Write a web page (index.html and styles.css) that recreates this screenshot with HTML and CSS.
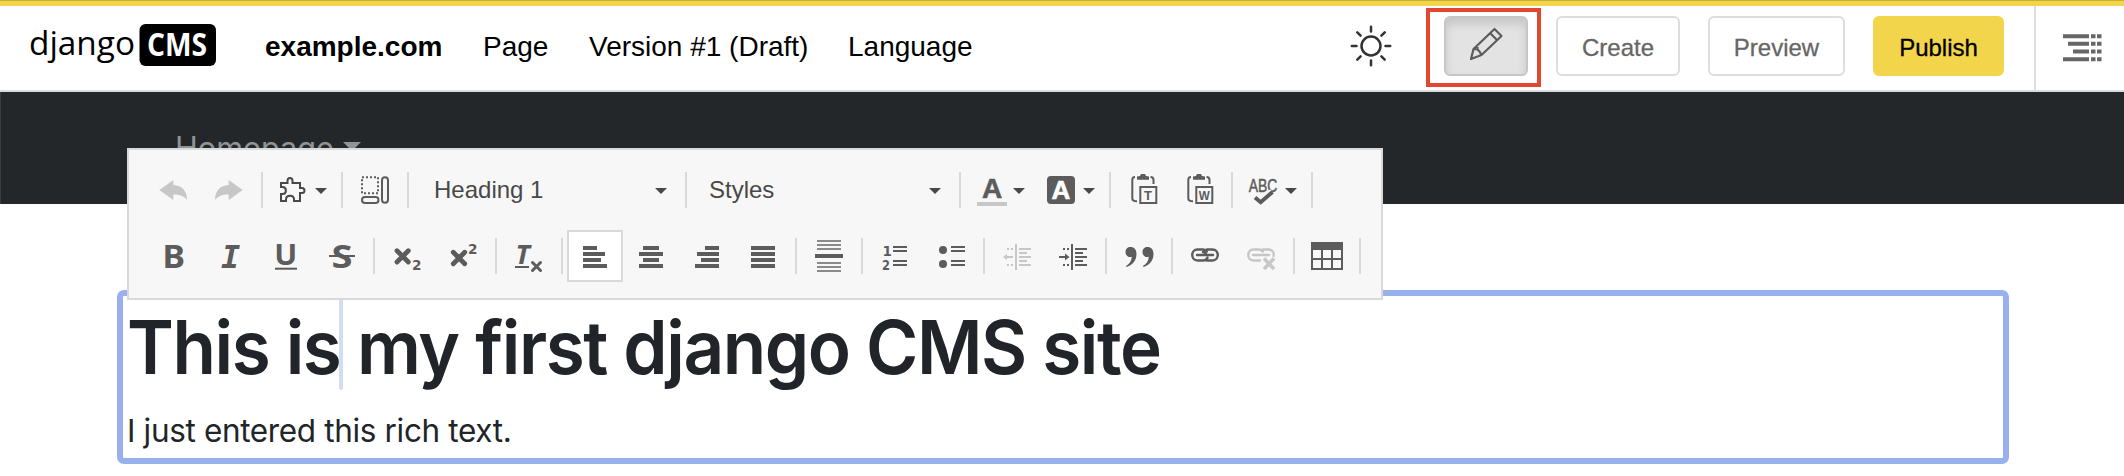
FILE: index.html
```html
<!DOCTYPE html>
<html lang="en">
<head>
<meta charset="utf-8">
<title>django CMS</title>
<link rel="stylesheet" href="styles.css">
</head>
<body>
<header class="cms-bar">
  <svg class="logo" width="188" height="46" viewBox="0 0 188 46">
    <text class="logo-word" x="1" y="32.700" textLength="106" lengthAdjust="spacingAndGlyphs">django</text>
    <rect x="111.5" y="2" width="76.5" height="42" rx="6"/>
    <text class="logo-cms" x="119" y="33.7" textLength="60" lengthAdjust="spacingAndGlyphs">CMS</text>
  </svg>
  <nav class="menu">
    <a class="site">example.com</a><a class="m-page">Page</a><a class="m-version">Version #1 (Draft)</a><a class="m-lang">Language</a>
  </nav>
  <div class="actions">
    <svg class="sun" width="42" height="42" viewBox="-21 -21 42 42">
      <circle r="9.5"/>
      <path d="M0-19.2V-14.5M0 14.5V19.2M-19.2 0H-14.5M14.5 0H19.2M-13.7-13.7L-10.4-10.4M10.4 10.4L13.7 13.7M-13.7 13.7L-10.4 10.4M10.4-10.4L13.7-13.7"/>
    </svg>
    <div class="highlight">
      <div class="btn edit">
        <svg width="34" height="34" viewBox="0 0 34 34"><path d="M2 32L4.5 22L25.5 2L32.5 9L12.5 28ZM4.5 22L8.5 22.5L10.5 24.5L12.5 28M21 6L28 13M8.5 22.5V20"/></svg>
      </div>
    </div>
    <div class="btn create">Create</div>
    <div class="btn preview">Preview</div>
    <div class="btn publish">Publish</div>
    <div class="structure">
      <svg width="39" height="28" viewBox="0 0 39 28">
        <path d="M0 .2H26V4.200H0ZM5 7.800H26V11.800H5ZM10 15.500H26V19.500H10ZM0 23.200H26V27.200H0Z"/>
        <path d="M28 .2H32.500V4.200H28ZM28 7.800H32.500V11.800H28ZM28 15.500H32.500V19.500H28ZM28 23.200H32.500V27.200H28ZM34 .2H38.500V4.200H34ZM34 7.800H38.500V11.800H34ZM34 15.500H38.500V19.500H34ZM34 23.200H38.500V27.200H34Z"/>
      </svg>
    </div>
  </div>
</header>

<div class="site-nav"><span>Homepage</span><i class="nav-caret"></i></div>

<main class="editable">
  <h1><span class="h-a">This is</span><i class="cursor"></i><span class="h-b">my first django CMS site</span></h1>
  <p>I just entered this rich text.</p>
</main>

<div class="toolbar">
  <div class="row">
    <svg class="ico off" viewBox="0 0 56 36"><path d="M14.3 18L28.3 8V13C37 13.5 42 19 42 28C38.5 23.5 34 22.3 28.3 22.5V28Z"/></svg>
    <svg class="ico off" viewBox="0 0 56 36"><path transform="matrix(-1 0 0 1 56 0)" d="M14.3 18L28.3 8V13C37 13.5 42 19 42 28C38.5 23.5 34 22.3 28.3 22.5V28Z"/></svg>
    <i class="sep"></i>
    <svg class="ico wide dark" viewBox="0 0 70 36"><path class="line" d="M14 11H20.5V9C20.5 5 25.5 5 25.5 9V11H33V16H35C38.3 16 38.3 21 35 21H33V29H27V27.500C27 22.500 19 22.500 19 27.500V29H14V22H15.500C20 22 20 15 15.500 15H14Z"/><path d="M48 16H60L54 22Z"/></svg>
    <i class="sep"></i>
    <svg class="ico" viewBox="0 0 56 36"><rect class="line dots" x="15" y="5.300" width="16" height="16"/><rect class="line" x="35" y="5.300" width="6" height="25.500" rx="3"/><rect class="line" x="15" y="25" width="16.500" height="6" rx="3"/></svg>
    <i class="sep"></i>
    <div class="combo format"><span>Heading 1</span><i class="caret"></i></div>
    <i class="sep"></i>
    <div class="combo style"><span>Styles</span><i class="caret"></i></div>
    <i class="sep"></i>
    <svg class="ico wide" viewBox="0 0 70 36"><text class="letter" x="27" y="26.300" font-size="28">A</text><rect class="swatch" x="12" y="30" width="30" height="4"/><path class="arrow" d="M48 16H60L54 22Z"/></svg>
    <svg class="ico wide" viewBox="0 0 70 36"><rect x="12" y="4" width="28" height="28" rx="4"/><text class="letter inverse" x="26" y="27" font-size="26">A</text><path class="arrow" d="M48 16H60L54 22Z"/></svg>
    <i class="sep"></i>
    <svg class="ico" viewBox="0 0 56 36"><path class="line" d="M20 5Q17.300 5 17.300 8V26.500Q17.300 29.300 22 29.300M35.500 5Q38.500 5 38.500 8V12"/><path d="M22 7.700V4.500L25 4L26 2H30L31 4L34 4.500V7.700Z"/><rect class="line" x="25.300" y="15" width="16" height="16"/><text class="tiny" x="29" y="27.800">T</text></svg>
    <svg class="ico" viewBox="0 0 56 36"><path class="line" d="M20 5Q17.300 5 17.300 8V26.500Q17.300 29.300 22 29.300M35.500 5Q38.500 5 38.500 8V12"/><path d="M22 7.700V4.500L25 4L26 2H30L31 4L34 4.500V7.700Z"/><rect class="line" x="25.300" y="15" width="16" height="16"/><text class="tiny" x="27.800" y="27.800" textLength="11" lengthAdjust="spacingAndGlyphs">W</text></svg>
    <i class="sep"></i>
    <svg class="ico wide" viewBox="0 0 70 36"><text class="abc" x="11.700" y="19.500" textLength="28.600" lengthAdjust="spacingAndGlyphs">ABC</text><path class="check-gap" d="M17.500 25L23.500 30L35.500 20"/><path class="check" d="M18 25.500L23.700 30.200L35.500 20"/><path class="arrow" d="M48 16H60L54 22Z"/></svg>
    <i class="sep"></i>
  </div>
  <div class="row">
    <svg class="ico" viewBox="0 0 56 36"><text class="fmt" x="17.500" y="29.700" textLength="22.500" lengthAdjust="spacingAndGlyphs">B</text></svg>
    <svg class="ico" viewBox="0 0 56 36"><text class="fmt slant" x="20" y="29.700">I</text></svg>
    <svg class="ico" viewBox="0 0 56 36"><text class="fmt under" x="17.300" y="26.700" textLength="23" lengthAdjust="spacingAndGlyphs">U</text><rect x="18" y="29.700" width="22" height="2"/></svg>
    <svg class="ico" viewBox="0 0 56 36"><text class="fmt" x="18.500" y="29.500" textLength="21" lengthAdjust="spacingAndGlyphs">S</text><rect x="16" y="17" width="26" height="2"/></svg>
    <i class="sep"></i>
    <svg class="ico" viewBox="0 0 56 36"><path class="cross" d="M18 12.700L29.300 24M29.300 12.700L18 24"/><text class="num" x="33" y="32" textLength="9.500" lengthAdjust="spacingAndGlyphs">2</text></svg>
    <svg class="ico" viewBox="0 0 56 36"><path class="cross" d="M18.300 14.300L29.700 25.700M29.700 14.300L18.300 25.700"/><text class="num" x="33" y="16" textLength="9.500" lengthAdjust="spacingAndGlyphs">2</text></svg>
    <i class="sep"></i>
    <svg class="ico" viewBox="0 0 56 36"><text class="fmt italic" x="14.500" y="26.200">T</text><rect x="14" y="28" width="14" height="2"/><path class="cross thin" d="M31.500 24.500L39.500 32.500M39.500 24.500L31.500 32.500"/></svg>
    <i class="sep"></i>
    <div class="pressed"><svg class="ico" viewBox="0 0 56 36"><path d="M16 8H30V12H16ZM16 14H38V18H16ZM16 20H34V24H16ZM16 26H40V30H16Z"/></svg></div>
    <svg class="ico" viewBox="0 0 56 36"><path d="M20 8H36V12H20ZM16 14H40V18H16ZM20 20H36V24H20ZM16 26H40V30H16Z"/></svg>
    <svg class="ico" viewBox="0 0 56 36"><path d="M26 8H40V12H26ZM18 14H40V18H18ZM22 20H40V24H22ZM16 26H40V30H16Z"/></svg>
    <svg class="ico" viewBox="0 0 56 36"><path d="M16 8H40V12H16ZM16 14H40V18H16ZM16 20H40V24H16ZM16 26H40V30H16Z"/></svg>
    <i class="sep"></i>
    <svg class="ico" viewBox="0 0 56 36"><path class="soft" d="M16 2H40V4H16ZM16 6H40V8H16ZM16 10H40V12H16ZM16 24H40V26H16ZM16 28H40V30H16ZM16 32H40V34H16Z"/><path d="M14 16H42V20H14Z"/></svg>
    <i class="sep"></i>
    <svg class="ico" viewBox="0 0 56 36"><text class="num" x="15.500" y="18">1</text><text class="num" x="15" y="32" textLength="8" lengthAdjust="spacingAndGlyphs">2</text><path d="M26 8H40V10H26ZM26 12H40V14H26ZM26 22H40V24H26ZM26 26H40V28H26Z"/></svg>
    <svg class="ico" viewBox="0 0 56 36"><circle cx="20" cy="12" r="4"/><circle cx="20" cy="26" r="4"/><path d="M28 8H42V10H28ZM28 12H42V14H28ZM28 22H42V24H28ZM28 26H42V28H28Z"/></svg>
    <i class="sep"></i>
    <svg class="ico off" viewBox="0 0 56 36"><path d="M26 6H28V32H26ZM30 10H42V12H30ZM30 14H38V16H30ZM30 18H42V20H30ZM30 22H38V24H30ZM30 26H42V28H30ZM18 10H20V12H18ZM22 10H24V12H22ZM18 26H20V28H18ZM22 26H24V28H22ZM14 19L18 16V18H24V20H18V22Z"/></svg>
    <svg class="ico" viewBox="0 0 56 36"><path d="M26 6H28V32H26ZM30 10H42V12H30ZM30 14H38V16H30ZM30 18H42V20H30ZM30 22H38V24H30ZM30 26H42V28H30ZM18 10H20V12H18ZM22 10H24V12H22ZM18 26H20V28H18ZM22 26H24V28H22ZM24.500 19L20 15.500V18H14V20H20V22.500Z"/></svg>
    <i class="sep"></i>
    <svg class="ico" viewBox="0 0 56 36"><path id="quote" d="M14.500 14C14.500 11 16.500 9 19.500 9C23 9 25.500 11.500 25.500 16C25.500 23 21 27.500 15.500 29L15 28C18.500 26 20.500 23 20.800 18.800C17.500 20 14.500 17.500 14.500 14Z"/><use href="#quote" x="17"/></svg>
    <i class="sep"></i>
    <svg class="ico" viewBox="0 0 56 36"><g class="link"><path d="M26 11.500H20.500C13.500 11.500 13.500 22.500 20.500 22.500H26C28.500 22.500 30 21 30.500 19.500M30 11.500H35.500C42.500 11.500 42.500 22.500 35.500 22.500H30M26 11.500C28 11.500 29 12.500 29.800 13.500"/><path d="M20 17H27C30 17 29 14 26 14M36 17H29"/></g></svg>
    <svg class="ico off" viewBox="0 0 56 36"><g class="link"><path d="M26 11.500H20.500C13.500 11.500 13.500 22.500 20.500 22.500H27M30 11.500H35.500C39.500 11.500 41.500 15 40.500 18M26 11.500C28 11.500 29 12.500 29.800 13.500"/><path d="M20 17H27M36 17H29"/></g><path class="cross unlink" d="M31 20.500L41 31M41 20.500L31 31"/></svg>
    <i class="sep"></i>
    <svg class="ico" viewBox="0 0 56 36"><path fill-rule="evenodd" d="M12 4H44V32H12ZM14 12V20H22V12ZM24 12V20H32V12ZM34 12V20H42V12ZM14 22V30H22V22ZM24 22V30H32V22ZM34 22V30H42V22Z"/></svg>
    <i class="sep"></i>
  </div>
</div>
</body>
</html>
```

FILE: styles.css
```css
* { box-sizing: border-box; }

body {
  margin: 0;
  position: relative;
  height: 476px;
  overflow: hidden;
  background: #fff;
  font-family: "Liberation Sans", Arial, sans-serif;
}

svg { display: block; flex: none; overflow: visible; }

.cms-bar {
  height: 92px;
  display: flex;
  align-items: flex-start;
  padding-left: 28px;
  border-top: 6px solid #f2d54b;
  border-bottom: 2px solid #d9dbde;
  background: #fff;
  position: relative;
}
.cms-bar::before {
  content: "";
  position: absolute;
  left: 0;
  right: 0;
  top: -6px;
  height: 1px;
  background: #c9ae35;
}

.logo { margin-top: 16px; }
.logo-word { font: 32.5px "Open Sans", sans-serif; }
.logo-cms { font: bold 32px "Open Sans", sans-serif; fill: #fff; }

.menu {
  display: flex;
  height: 81px;
  align-items: center;
  font-size: 28px;
  line-height: 32px;
  white-space: nowrap;
  color: #000;
}
.menu a { display: block; }
.site { margin-left: 49px; width: 218px; font-weight: bold; }
.m-page { width: 106px; }
.m-version { width: 259px; }

.actions { display: flex; margin-left: auto; }
.sun {
  margin: 18.5px 55px 0 0;
  fill: none;
  stroke: #333;
  stroke-width: 2.5;
  stroke-linecap: round;
}
.highlight {
  width: 115px;
  height: 79px;
  margin: 2px 15px 0 -21px;
  padding: 4px 0 0 14px;
  border: 4px solid #e2472f;
}
.btn {
  height: 60px;
  border: 2px solid #ddd;
  border-radius: 6px;
  display: flex;
  align-items: center;
  justify-content: center;
  font-size: 24px;
  color: #666;
  -webkit-text-stroke: .3px currentColor;
  margin-top: 10px;
  padding-top: 3px;
}
.highlight .btn {
  width: 84px;
  margin: 0;
  padding: 0;
  border-color: #c6c6c6;
  background: #e3e3e3;
  box-shadow: inset 0 6px 10px rgba(0, 0, 0, .13);
}
.edit svg { fill: none; stroke: #5c5c5c; stroke-width: 2.2; stroke-linejoin: round; margin-top: -4px; }
.create { width: 124px; }
.preview { width: 137px; margin-left: 28px; }
.publish { width: 131px; margin-left: 28px; color: #000; background: #f2d54b; border-color: #f2d54b; }
.structure {
  width: 90px;
  height: 84px;
  margin-left: 30px;
  padding: 28px 0 0 27px;
  border-left: 2px solid #ddd;
}
.structure svg { fill: #666; }

.site-nav {
  height: 112px;
  padding: 36px 0 0 174px;
  display: flex;
  align-items: flex-start;
  background: #23272a;
  border-left: 1px solid #3a3e41;
  color: #919394;
  font: 30.7px/40px Inter, sans-serif;
}
.nav-caret {
  margin: 14px 0 0 9px;
  border: 9px solid transparent;
  border-top-color: currentColor;
  border-bottom: 0;
}

.editable {
  margin: 86px 0 0 117px;
  width: 1892px;
  height: 174px;
  border: 6px solid #98b1ec;
  border-radius: 7px;
  padding-left: 4px;
  color: #212529;
  font-family: Inter, sans-serif;
}
.editable h1 {
  display: flex;
  margin: 0;
  height: 106px;
  font-size: 74px;
  line-height: 88px;
  font-weight: 570;
  letter-spacing: -1.5px;
  white-space: nowrap;
}
.h-a, .h-b { padding-top: 7px; transform: scaleX(.96); transform-origin: left; }
.h-a { width: 212px; }
.cursor { width: 4px; height: 94px; margin-right: 14px; border-radius: 2px; background: #d1ddf3; }
.editable p { margin: 0; padding-top: 9px; font-size: 31.5px; line-height: 40px; letter-spacing: -.35px; }

.toolbar {
  position: absolute;
  left: 127px;
  top: 148px;
  width: 1256px;
  height: 152px;
  padding: 14px 0 0 16px;
  border: 2px solid #d9d9d9;
  background: #f7f7f7;
}
.row { display: flex; align-items: center; height: 52px; margin-bottom: 14px; }
.sep { flex: none; width: 2px; height: 36px; margin: 0 4px; background: #d9d9d9; }
.ico { width: 56px; height: 36px; fill: #5c5c5c; color: #5c5c5c; }
.wide { width: 70px; }
.off { fill: #c7c7c7; color: #c7c7c7; }
.dark { fill: #484848; color: #484848; }
.line { fill: none; stroke: currentColor; stroke-width: 2; }
.dots { stroke-dasharray: 2 2; }
.arrow { fill: #484848; }
.swatch { fill: #c8c8c8; }
.soft { fill: #8a8a8a; }
.letter { font-family: "Liberation Sans", sans-serif; font-weight: bold; text-anchor: middle; stroke: currentColor; stroke-width: .6; }
.inverse { fill: #fff; stroke: #fff; }
.tiny { font: bold 13px "Liberation Sans", sans-serif; }
.abc { font: 18.5px "Liberation Sans", sans-serif; stroke: currentColor; stroke-width: .5; }
.check-gap { fill: none; stroke: #f7f7f7; stroke-width: 7; }
.check { fill: none; stroke: currentColor; stroke-width: 4; }
.fmt { font-family: "Noto Sans", sans-serif; font-size: 32px; font-weight: bold; }
.under { font-size: 28.5px; }
.slant { font-family: "DejaVu Sans Mono", monospace; font-style: italic; }
.italic { font-style: italic; font-size: 27px; }
.num { font: bold 13.5px "DejaVu Sans", sans-serif; }
.cross { fill: none; stroke: currentColor; stroke-width: 4.8; stroke-linecap: round; }
.thin { stroke-width: 3; }
.unlink { stroke-width: 3.5; stroke-linecap: butt; }
.link { fill: none; stroke: currentColor; stroke-width: 2.4; stroke-linecap: round; }

.pressed { width: 56px; height: 52px; border: 2px solid #d9d9d9; background: #fff; padding: 6px 0 0; }
.pressed .ico { margin-left: -2px; }

.combo { display: flex; align-items: center; justify-content: space-between; height: 36px; padding-right: 14px; font-size: 24px; line-height: 28px; color: #484848; }
.format { width: 268px; padding-left: 21px; }
.style { width: 264px; padding-left: 18px; }
.caret { border: 6px solid transparent; border-top-color: #484848; border-bottom: 0; margin-top: 2px; }
```
